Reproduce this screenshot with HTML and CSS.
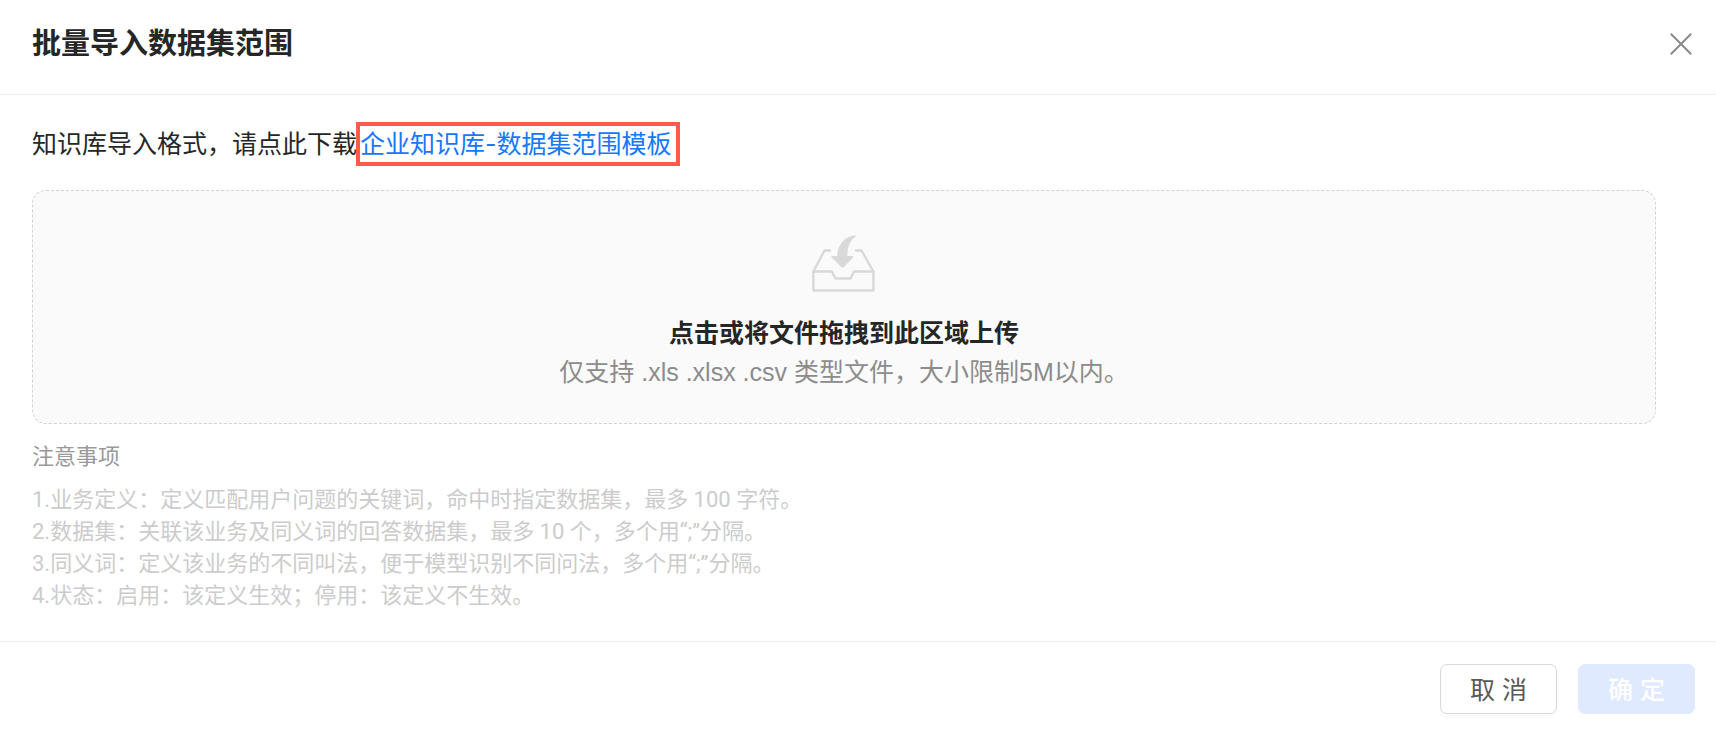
FILE: index.html
```html
<!DOCTYPE html>
<html lang="zh-CN">
<head>
    <meta charset="UTF-8">
    <meta name="viewport" content="width=device-width, initial-scale=1.0">
    <title>批量导入数据集范围</title>
    <link rel="stylesheet" href="styles.css">
</head>
<body>
    <div class="modal" role="dialog" aria-labelledby="modalTitle">
        <header class="modal-header">
            <h1 id="modalTitle">批量导入数据集范围</h1>
            <button type="button" class="close-btn" aria-label="关闭">
                <svg width="22" height="22" viewBox="0 0 22 22" fill="none" stroke="#8a8a8a" stroke-width="2">
                    <path d="M0.8 0.8L21.2 21.2M21.2 0.8L0.8 21.2"/>
                </svg>
            </button>
        </header>
        <form id="importForm">
            <div class="modal-body">
                <p class="intro">知识库导入格式，请点此下载<a class="template-link" href="#">企业知识库-数据集范围模板</a></p>
                <label class="upload-area" for="file">
                    <input type="file" id="file" name="file" accept=".xls,.xlsx,.csv">
                    <svg class="upload-icon" width="64" height="58" viewBox="0 0 64 58">
                        <g fill="none" stroke="#d9d9d9" stroke-width="2.4" stroke-linejoin="round" stroke-linecap="round">
                            <path d="M18 16.5H12.5L1.4 37.5V56.5H61.4V37.5L49.5 16.5H44"/>
                            <path d="M1.4 37.5H20L23.4 44.5H38.5L42 37.5H61.4"/>
                        </g>
                        <path fill="#d9d9d9" d="M44 1.2C33.5 1.5 25.5 10 25.3 22H20Q18.9 22.3 19.7 23.4L29.8 33.4Q30.7 34 31.5 33.4L41.1 23.4Q41.7 22.3 40.5 22H35.5C35 13 38 6 44 2.4Q45.1 1.4 44 1.2Z"/>
                    </svg>
                    <span class="upload-title">点击或将文件拖拽到此区域上传</span>
                    <span class="upload-hint">仅支持 .xls .xlsx .csv 类型文件，大小限制5M以内。</span>
                </label>
                <div class="notes">
                    <h2>注意事项</h2>
                    <p>1.业务定义：定义匹配用户问题的关键词，命中时指定数据集，最多 100 字符。</p>
                    <p>2.数据集：关联该业务及同义词的回答数据集，最多 10 个，多个用“;”分隔。</p>
                    <p>3.同义词：定义该业务的不同叫法，便于模型识别不同问法，多个用“;”分隔。</p>
                    <p>4.状态：启用：该定义生效；停用：该定义不生效。</p>
                </div>
            </div>
            <footer class="modal-footer">
                <button type="button" class="btn">取 消</button>
                <button type="submit" class="btn btn-primary" disabled>确 定</button>
            </footer>
        </form>
    </div>
</body>
</html>
```
FILE: styles.css
```css
body {
    font-family: "Liberation Sans", "Noto Sans CJK SC", sans-serif;
    font-size: 25px;
    color: #262626;
    background-color: #fff;
    margin: 0;
}
h1, h2, p {
    margin: 0;
}
.modal-header {
    display: flex;
    justify-content: space-between;
    align-items: flex-end;
    padding: 21px 24px 33px 32px;
    border-bottom: 1px solid #ebebeb;
}
.modal-header h1 {
    font-size: 29px;
    line-height: 40px;
    font-weight: bold;
    font-family: "Noto Sans CJK SC", sans-serif;
}
.close-btn {
    display: flex;
    padding: 0 0 6px;
    border: none;
    background: none;
    cursor: pointer;
}
.modal-body {
    padding: 31px 60px 29px 32px;
}
.intro {
    line-height: 36px;
    margin-bottom: 28px;
    font-family: Inter, "Noto Sans CJK SC", sans-serif;
}
.template-link {
    display: inline-block;
    margin-left: 3px;
    padding-right: 4px;
    color: #1677ff;
    text-decoration: none;
    outline: 4px solid #ff5b4d; /* highlight the download link */
}
.upload-area {
    display: flex;
    flex-direction: column;
    align-items: center;
    padding: 43px 20px 32px;
    border: 1px dashed #d4d4d4;
    border-radius: 14px;
    background-color: #fafafa;
    cursor: pointer;
}
.upload-area input {
    position: absolute;
    width: 1px;
    height: 1px;
    opacity: 0;
}
.upload-icon {
    margin-bottom: 21px;
}
.upload-title {
    font-weight: bold;
    line-height: 40px;
}
.upload-hint {
    color: #8c8c8c;
    line-height: 38px;
}
.notes {
    font-family: Roboto, "Noto Sans CJK SC", sans-serif;
    font-size: 22px;
    line-height: 32px;
    color: #ccc;
    margin-top: 17px;
}
.notes h2 {
    font-size: 22px;
    font-weight: normal;
    color: #999;
    margin-bottom: 11px;
}
.modal-footer {
    display: flex;
    justify-content: flex-end;
    gap: 21px;
    padding: 22px 21px;
    border-top: 1px solid #ebebeb;
}
.btn {
    width: 117px;
    height: 50px;
    padding: 0 0 2px;
    border: 1px solid #d9d9d9;
    border-radius: 7px;
    background-color: #fff;
    box-shadow: 0 4px 0 rgba(0, 0, 0, 0.02);
    color: #595959;
    font-family: inherit;
    font-size: 25px;
    cursor: pointer;
}
.btn-primary {
    border-color: #dfe9ff;
    background-color: #dfe9ff;
    box-shadow: none;
    color: #fff;
    font-weight: 500;
    cursor: not-allowed;
}
```
